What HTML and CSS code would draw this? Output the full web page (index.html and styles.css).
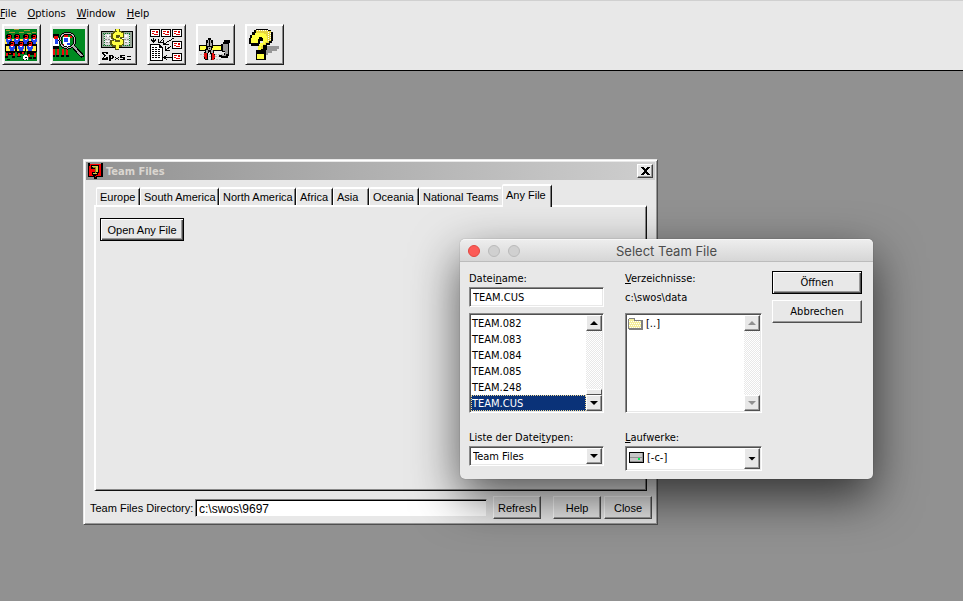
FILE: index.html
```html
<!DOCTYPE html>
<html lang="en">
<head>
<meta charset="utf-8">
<title>Team Files</title>
<link rel="stylesheet" href="styles.css">
</head>
<body>
<header class="app-bar">
  <nav class="menu">
    <a href="#file"><u>F</u>ile</a>
    <a href="#options"><u>O</u>ptions</a>
    <a href="#window"><u>W</u>indow</a>
    <a href="#help"><u>H</u>elp</a>
  </nav>
  <div class="toolbar">
    <div class="tool-group tool-group-a">
      <button class="tool" type="button" aria-label="Teams">
        <svg width="32" height="32" viewBox="0 0 32 32" shape-rendering="crispEdges">
          <defs>
            <g id="player">
              <path fill="#000" d="M1 0h4v1h1v3H5V2H1v2H0V1h1z"/>
              <path fill="#f00a0a" d="M1 1h4v4H1z"/>
              <path fill="#000" d="M1 1h1v1h2v1H2v1H1z"/>
              <path fill="#2145f0" d="M0 5h6v3H5v2H1V8H0z"/>
              <path fill="#fff" d="M2 5h2v1H2z"/>
            </g>
          </defs>
          <path fill="#008421" d="M0 0h32v32H0z"/>
          <path fill="#a4952e" d="M1 1h4v1H1zM9 0h5v1H9zM19 1h6v1h-6zM27 3h4v1h-4zM4 3h6v1H4zM14 3h5v1h-5zM22 4h4v1h-4z"/>
          <path fill="#fff04a" d="M0 10h8v5H0zM8 10h2v4H8zM14 10h4v4h-4zM24 10h8v5h-8z"/>
          <path fill="#000" d="M0 15h32v2H0z"/>
          <use href="#player" x="1" y="5"/><use href="#player" x="9" y="5"/><use href="#player" x="18" y="5"/><use href="#player" x="26" y="5"/>
          <path fill="#fff04a" d="M1 17h30v5H1z"/>
          <path fill="#000" d="M0 17h1v6H0zM10 17h2v6h-2zM20 17h1v6h-1zM31 17h1v6h-1z"/>
          <use href="#player" x="4" y="12"/><use href="#player" x="13" y="12"/><use href="#player" x="22" y="12"/>
          <path fill="#000" d="M1 22h9v4H1zM12 22h8v3h-8zM22 22h9v4h-9z"/>
          <path fill="#f00a0a" d="M1 24h2v3H1zM4 24h2v1H4zM8 24h2v3H8zM13 24h2v3h-2zM17 23h2v2h-2zM23 25h2v3h-2zM29 24h2v4h-2z"/>
          <path fill="#000" d="M0 27h3v2H0zM2 30h3v1H2zM7 27h3v2H7zM12 27h4v1h-4zM24 28h3v2h-3zM28 28h3v2h-3z"/>
          <path fill="#fff" d="M18 27h5v4h-5zM19 26h3v1h-3z"/>
          <path fill="#000" d="M20 28h2v1h-2zM18 30h1v1h-1zM21 30h1v1h-1z"/>
        </svg>
      </button>
      <button class="tool" type="button" aria-label="Search players">
        <svg width="32" height="32" viewBox="0 0 32 32" shape-rendering="crispEdges">
          <path fill="#008a21" d="M0 0h32v32H0z"/>
          <path fill="#fff" d="M0 9h6v9H0z"/>
          <path fill="#000" d="M0 5h6v3H0zM0 17h6v3H0zM0 26h2v2H0zM3 26h3v2H3zM8 26h3v2H8zM13 26h3v2h-3z"/>
          <path fill="#f00a0a" d="M1 7h4v3H1zM0 20h2v6H0zM4 20h2v6H4zM9 20h2v6H9zM13 20h2v6h-2z"/>
          <path fill="#2145f0" d="M2 10h3v5H2z"/>
          <path fill="#fff" d="M10 8h7v10h-7z"/>
          <path fill="#f00a0a" d="M11 5h4v3h-4zM17 7h2v2h-2zM10 15h1v3h-1z"/>
          <path fill="#2145f0" d="M11 9h4v4h-4zM14 14h3v2h-3z"/>
          <path fill="#000" d="M11 3h4v2h-4z"/>
          <circle cx="14.500" cy="11.500" r="7.500" fill="none" stroke="#000" stroke-width="3"/>
          <circle cx="14.500" cy="11.500" r="7.500" fill="none" stroke="#bcbcbc" stroke-width="1"/>
          <path stroke="#000" stroke-width="4" d="M20 17l10 11"/>
          <path stroke="#aaa" stroke-width="2" d="M20 17l9 10"/>
        </svg>
      </button>
      <button class="tool" type="button" aria-label="Prices">
        <svg width="32" height="32" viewBox="0 0 32 32" shape-rendering="crispEdges">
          <path fill="#000" d="M0 2h32v17H0z"/>
          <path fill="#97a497" d="M1 3h30v15H1z"/>
          <path fill="#ddd" d="M3 5h26v11H3z"/>
          <path fill="none" stroke="#087b28" stroke-dasharray="1 1" d="M2 4.500h27M2 16.500h27M3.500 5v11M28.500 5v11"/>
          <path fill="none" stroke="#909090" stroke-dasharray="2 1" d="M5 7.500h6M4 10.500h8M5 13.500h6M21 7.500h6M20 10.500h8M21 13.500h6"/>
          <path fill="#fff" d="M6 6h2v2H6zM5 12h3v1H5zM24 6h2v2h-2zM24 12h3v1h-3zM9 9h2v3H9zM21 9h2v3h-2z"/>
          <path fill="#5c5a10" d="M14 0h5v2h2v1h2v6h-4v-1h-1v1h3v1h2v6h-2v2h-3v3h-4v-3h-3v-2h-2v-5h4v1h1v-1h-2v-1h-2V4h2V2h2z"/>
          <path fill="#ffff42" d="M15 0h3v3h2v1h2v4h-3V6h-4v3h4v1h2v1h1v4h-1v1h-3v4h-3v-4h-3v-1h-1v-3h3v1h5v-2h-4v-1h-2v-1h-1V5h1V4h1V3h2z"/>
          <path fill="#000" d="M1 23h6v2H5v-1H3v1h1v1h1v1H4v1H3v1h2v-1h2v3H1v-2h1v-1h1v-2H2v-1H1zM8 26h4v1h1v2h-1v1h-2v2H8zM10 27v2h1v-2zM14 28h1v1h-1zM17 28h1v1h-1zM15 29h2v1h-2zM14 30h1v1h-1zM17 30h1v1h-1zM19 26h5v1h-3v1h3v3h-5v-1h3v-1h-3zM26 27h4v1h-4zM26 30h4v1h-4z"/>
        </svg>
      </button>
    </div>
    <div class="tool-group tool-group-b">
      <button class="tool" type="button" aria-label="Collect letters">
        <svg width="32" height="32" viewBox="0 0 32 32" shape-rendering="crispEdges">
          <defs>
            <g id="mail">
              <path fill="#000" d="M0 0h10v8H0z"/>
              <path fill="#fff" d="M1 1h8v6H1z"/>
              <path fill="#e00000" d="M2 2h3v1H2zM6 2h2v2H6zM2 4h2v1H2zM4 5h4v1H4z"/>
            </g>
          </defs>
          <use href="#mail" x="0" y="0"/><use href="#mail" x="11" y="0"/><use href="#mail" x="22" y="0"/>
          <use href="#mail" x="22" y="12"/><use href="#mail" x="22" y="24"/>
          <path fill="none" stroke="#000" d="M3.500 9v4M1 10.500l2.500 2.500 2.500-2.500M14 9l-5 5M8.500 10v3.500h4M24 9l-10 6M13.500 11v4h5M21 17l-5 4M15.500 17v4h4M22 28.500h-7M17 26l-3 2.500 3 2.500"/>
          <path fill="#000" d="M0 15h10v1h1v1h1v1h1v14H0z"/>
          <path fill="#fff" d="M1 16h8v3h3v12H1z"/>
          <path fill="none" stroke="#000" stroke-dasharray="2 1" d="M2 18.500h6M2 20.500h9M2 22.500h9M2 24.500h9M2 26.500h9M2 28.500h9"/>
        </svg>
      </button>
      <button class="tool" type="button" aria-label="Tools">
        <svg width="32" height="32" viewBox="0 0 32 32" shape-rendering="crispEdges">
          <path fill="none" stroke="#bdbdbd" stroke-dasharray="2 1" d="M1 25.500h30M4 27.500h24M8 30.500h14"/>
          <path fill="#000" d="M0 16h23v6H0z"/>
          <path fill="#ffff42" d="M1 17h6v4H1zM13 17h9v4h-9z"/>
          <path fill="#000" d="M22 15h2v-2h1v-2h6v3h-1v13h-1v2h-7v-1h-2v-2h5v-2h1v-1h-3z"/>
          <path fill="#9a9a9a" d="M24 15h5v7h-5zM26 22h3v3h-2v2h-4v-1h3z"/>
          <path fill="#000" d="M9 9h3v2h2v8h-1v3h2v3h1v5h-1v1h-3v-5l-1-3h-1l-1 3v5H6v-1H5v-7h1v-3h2v-2H7v-7h2z"/>
          <path fill="#aaa" d="M9 11h3v3H9zM8 14h2v3H8zM11 14h2v3h-2zM9 18h3v3H9zM7 21h2v3H7zM12 21h2v3h-2z"/>
          <path fill="#000" d="M10 11h1v6h-1zM10 19h1v1h-1z"/>
          <path fill="#e61010" d="M5 24h3v6H6v-2H5zM13 24h2v2h1v3h-1v2h-2z"/>
        </svg>
      </button>
      <button class="tool" type="button" aria-label="Help">
        <svg width="32" height="32" viewBox="0 0 32 32" shape-rendering="crispEdges">
          <path fill="#979797" d="M18 17h13v3h-2v2h-5v2h-4v2h-3z"/>
          <path fill="#000" d="M8 0h12v1h3v2h2v9h-1v2h-2v2h-3v5h-1v10H8v-7h2v-7h3v-2h2v-3h-3v3h-1v2H3v-2H1V9h1V6h2V3h2V1h2z"/>
          <path fill="#e6d63f" d="M8 1h12v1h3v10h-2v2h-3v2h-3v4h-4v-4h2v-2h4V6h-3V4H8z"/>
          <path fill="none" stroke="#fff" stroke-dasharray="1 1" d="M9 1.500h11M20.500 3v9M22.500 4v7"/>
          <path fill="#ffff42" d="M7 4h9v1h2v2h1v6h-2v2h-2v2h-2v4h-3v-4h2v-3h3V9h-1V8h-3v2h-1v4H3v-5h1V6h3zM9 25h7v5H9z"/>
          <path fill="#000" d="M8 21h9v3H8z"/>
        </svg>
      </button>
    </div>
  </div>
</header>

<main class="desktop">
  <section class="team-window" aria-label="Team Files">
    <div class="title-bar">
      <svg class="title-icon" width="15" height="16" viewBox="0 0 15 16" shape-rendering="crispEdges">
        <path fill="#000" d="M0 0h2v1h11V0h2v14H9v2H6v-2H0z"/>
        <path fill="#f00" d="M2 1h11v12H8v1H7v-1H1V3h1z"/>
        <path fill="#000" d="M3 2h8v8h-1v2H8v1H5v-1H4V9h3V6H3z"/>
        <path fill="#d8cc4a" d="M4 3h6v1H4zM8 4h2v5H8zM5 10h4v1H5z"/>
        <path fill="#8f8420" d="M5 4h3v1H5zM7 5h1v5H7z"/>
      </svg>
      <h1>Team Files</h1>
      <button class="close" type="button" aria-label="Close window">
        <svg width="9" height="8" viewBox="0 0 9 8" shape-rendering="crispEdges"><path d="M0 0h3v1h1v1h1V1h1V0h3v1H8v1H7v1H6v2h1v1h1v1h1v1H6V7H5V6H4v1H3v1H0V7h1V6h1V5h1V3H2V2H1V1H0z"/></svg>
      </button>
    </div>
    <div class="team-body">
      <div class="tabs" role="tablist">
        <button role="tab" type="button">Europe</button>
        <button role="tab" type="button">South America</button>
        <button role="tab" type="button">North America</button>
        <button role="tab" type="button">Africa</button>
        <button role="tab" type="button">Asia</button>
        <button role="tab" type="button">Oceania</button>
        <button role="tab" type="button">National Teams</button>
        <button role="tab" type="button" aria-selected="true">Any File</button>
      </div>
      <div class="panel" role="tabpanel">
        <button class="btn default" type="button">Open Any File</button>
      </div>
    </div>
    <div class="team-footer">
      <label for="dir">Team Files Directory:</label>
      <input id="dir" type="text" value="c:\swos\9697">
      <button class="btn refresh" type="button">Refresh</button>
      <button class="btn" type="button">Help</button>
      <button class="btn" type="button">Close</button>
    </div>
  </section>

  <section class="dialog" role="dialog" aria-label="Select Team File">
    <div class="dialog-title">
      <div class="lights">
        <button class="light red" type="button" aria-label="Close"></button>
        <button class="light" type="button" aria-label="Minimise"></button>
        <button class="light" type="button" aria-label="Zoom"></button>
      </div>
      <h2>Select Team File</h2>
    </div>
    <div class="dialog-body">
      <div class="col">
        <label for="name">Datei<u>n</u>ame:</label>
        <input class="sunken" id="name" type="text" value="TEAM.CUS">
        <div class="sunken list">
          <select size="6" aria-label="Dateien">
            <option>TEAM.082</option>
            <option>TEAM.083</option>
            <option>TEAM.084</option>
            <option>TEAM.085</option>
            <option>TEAM.248</option>
            <option selected>TEAM.CUS</option>
          </select>
          <div class="scroll">
            <button class="arrow up" type="button" aria-label="Scroll up"></button>
            <div class="track"><div class="thumb"></div></div>
            <button class="arrow down" type="button" aria-label="Scroll down"></button>
          </div>
        </div>
        <label class="lower" for="types">Liste der Datei<u>t</u>ypen:</label>
        <div class="sunken combo">
          <select id="types"><option>Team Files</option></select>
          <span class="arrow down"></span>
        </div>
      </div>
      <div class="col">
        <label for="dirs"><u>V</u>erzeichnisse:</label>
        <p class="path">c:\swos\data</p>
        <div class="sunken list">
          <svg class="folder" width="15" height="12" viewBox="0 0 15 12" shape-rendering="crispEdges">
            <path fill="#808080" d="M1 0h6v2h8v10H1v-1H0V1h1z"/>
            <path fill="#f4ee9a" d="M1 1h5v2h7v7H1z"/>
            <path fill="none" stroke="#fff" stroke-dasharray="1 1" d="M1 3.500h12M2 5.500h11M1 7.500h12M2 9.500h11"/>
          </svg>
          <select id="dirs" size="6"><option>[..]</option></select>
          <div class="scroll disabled">
            <button class="arrow up" type="button" disabled aria-label="Scroll up"></button>
            <div class="track"></div>
            <button class="arrow down" type="button" disabled aria-label="Scroll down"></button>
          </div>
        </div>
        <label class="lower" for="drives"><u>L</u>aufwerke:</label>
        <div class="sunken combo tall">
          <svg class="drive" width="15" height="11" viewBox="0 0 15 11" shape-rendering="crispEdges">
            <path fill="#000" d="M0 0h15v11H0z"/>
            <path fill="#c6c6c6" d="M1 1h13v9H1z"/>
            <path fill="#909090" d="M1 5h13v1H1zM1 9h13v1H1zM13 1h1v9h-1z"/>
            <path fill="#00f050" d="M9 6h2v2H9z"/>
          </svg>
          <select id="drives"><option>[-c-]</option></select>
          <span class="arrow down"></span>
        </div>
      </div>
      <div class="actions">
        <button class="btn default" type="button">Öffnen</button>
        <button class="btn" type="button">Abbrechen</button>
      </div>
    </div>
  </section>
</main>
</body>
</html>
```

FILE: styles.css
```css
* { box-sizing: border-box; }

body {
  margin: 0;
  min-height: 100vh;
  display: flex;
  flex-direction: column;
  background: #919191;
  color: #000;
  font: 11px/14px "DejaVu Sans Condensed", "Noto Sans", sans-serif;
}

button, input, select { font: inherit; color: inherit; margin: 0; border-radius: 0; }
h1, h2, p { margin: 0; font-size: inherit; }
svg { display: block; flex: none; }

/* Menu and toolbar */
.app-bar {
  background: #e8e8e8;
  border-top: 1px solid #d0d0d0;
  border-bottom: 1px solid #000;
  padding: 6px 0 5px;
}
.menu { display: flex; gap: 11px; }
.menu a { color: #000; text-decoration: none; }
.toolbar { display: flex; gap: 10px; padding: 3px 2px 0; }
.tool-group { display: flex; }
.tool-group-a { gap: 9px; }
.tool-group-b { gap: 10px; }
.tool {
  width: 39px;
  height: 41px;
  padding: 0 2px;
  background: #e8e8e8;
  border: 1px solid;
  border-color: #fff #202020 #202020 #fff;
  box-shadow: inset 1px 1px #fff, inset -1px -1px #888;
}

/* Free canvas of windows */
.desktop { position: relative; flex: 1; }

.team-window {
  position: absolute;
  left: 83px;
  top: 88px;
  width: 575px;
  background: #e8e8e8;
  border: 1px solid;
  border-color: #e8e8e8 #505050 #505050 #e8e8e8;
  box-shadow: inset 1px 1px #fff, inset -1px -1px #999;
  padding: 2px;
  font-family: "Liberation Sans", Arial, sans-serif;
}
.title-bar {
  display: flex;
  align-items: center;
  gap: 3px;
  height: 18px;
  padding: 0 2px;
  background: linear-gradient(to right, #929292, #cecece);
}
.title-bar h1 {
  flex: 1;
  padding-top: 2px;
  color: #dad6d0;
  font: bold 11px/14px "DejaVu Sans Condensed", sans-serif;
}
.close {
  display: grid;
  place-items: center;
  width: 16px;
  height: 14px;
  padding: 0;
  background: #e8e8e8;
  border: 1px solid;
  border-color: #fff #404040 #404040 #fff;
  box-shadow: inset -1px -1px #999;
}
.team-body { padding: 4px 8px 0; }
.tabs {
  display: grid;
  grid-template-columns: 44px 79px 77px 37px 36px 50px 83px 50px;
  align-items: end;
  margin-left: 2px;
}
.tabs button {
  height: 18px;
  padding: 0 3px;
  text-align: left;
  white-space: nowrap;
  background: #e8e8e8;
  border: 0 solid;
  border-width: 2px 1px 0 1px;
  border-color: #fff #101010 #fff #fff;
  border-radius: 2px 2px 0 0;
  box-shadow: inset -1px 0 #808080;
}
.tabs button:nth-child(7) { border-right-color: #e8e8e8; box-shadow: none; }
.tabs button[aria-selected] {
  position: relative;
  height: 23px;
  margin-bottom: -2px;
  padding-bottom: 4px;
}
.panel {
  height: 286px;
  padding: 11px 4px;
  border: 1px solid;
  border-color: #fff #101010 #101010 #fff;
  border-top-width: 2px;
  border-left-width: 2px;
  box-shadow: inset -1px -1px #888;
}
.btn {
  height: 23px;
  padding: 0 4px;
  background: #e8e8e8;
  border: 1px solid;
  border-color: #fff #505050 #505050 #fff;
  box-shadow: inset -1px -1px #999;
}
.btn.default {
  border-color: #000;
  box-shadow: inset 1px 1px #fff, inset -1px -1px #505050, inset -2px -2px #999;
}
.panel .btn { width: 84px; }
.team-footer {
  display: flex;
  align-items: center;
  gap: 3px;
  padding: 5px 3px 3px 4px;
}
.team-footer label { width: 102px; white-space: nowrap; }
.team-footer input {
  flex: 1;
  min-width: 0;
  height: 18px;
  padding: 2px 3px 0;
  font-size: 12px;
  background: #fff;
  border: 1px solid;
  border-color: #808080 #e8e8e8 #e8e8e8 #808080;
  box-shadow: inset 1px 1px #000;
}
.team-footer .btn { width: 48px; }
.team-footer .refresh { margin: 0 9px 0 3px; }

/* File dialog */
.dialog {
  position: absolute;
  left: 460px;
  top: 168px;
  width: 413px;
  background: #e8e8e8;
  border-radius: 5px;
  box-shadow: 0 0 1px rgba(0, 0, 0, .5), 0 18px 48px rgba(0, 0, 0, .65);
}
.dialog-title {
  display: grid;
  grid-template-columns: 1fr auto 1fr;
  align-items: center;
  height: 23px;
  padding: 0 8px;
  background: linear-gradient(#ededed, #d6d6d6);
  border-top: 1px solid #f6f6f6;
  border-bottom: 1px solid #bcbcbc;
  border-radius: 5px 5px 0 0;
}
.dialog-title h2 {
  color: #4c4c4c;
  font: 13px/16px Inter, Roboto, sans-serif;
}
.lights { display: flex; gap: 8px; }
.light {
  width: 12px;
  height: 12px;
  padding: 0;
  background: #d0d0d0;
  border: 1px solid #bababa;
  border-radius: 50%;
}
.light.red { background: #fc5b57; border-color: #e2463f; }
.dialog-body {
  display: grid;
  grid-template-columns: 156px 147px 90px;
  padding: 9px 11px 8px 9px;
}
.col { display: flex; flex-direction: column; }
.col:first-child { padding-right: 21px; }
.col:nth-child(2) { padding-right: 10px; }
.col label { height: 16px; padding-top: 1px; }
.path { height: 20px; padding-top: 4px; }
.sunken {
  background: #fff;
  border: 1px solid;
  border-color: #888 #fff #fff #888;
  box-shadow: inset 1px 1px #505050, inset -1px -1px #e8e8e8;
}
input.sunken { width: 100%; height: 20px; padding: 0 3px; }
.list {
  display: flex;
  height: 100px;
  margin-top: 6px;
  padding: 1px;
}
.list select {
  flex: 1;
  min-width: 0;
  height: 96px;
  padding: 0;
  border: 0;
  outline: 0;
  background: none;
  overflow: hidden;
}
.list option {
  height: 16px;
  min-height: 16px;
  padding: 2px 1px 0;
  line-height: 14px;
}
.list option:checked {
  color: #fff;
  background: #0a3278 linear-gradient(#0a3278, #0a3278);
  outline: 1px dotted #f0d890;
  outline-offset: -1px;
}
.folder { margin: 3px 2px 0 1px; }
.scroll { display: flex; flex-direction: column; width: 16px; }
.track {
  flex: 1;
  display: flex;
  align-items: flex-end;
  background: repeating-conic-gradient(#fff 0 25%, #e8e8e8 0 50%) 0 0 / 2px 2px;
}
.thumb {
  width: 100%;
  height: 6px;
  background: #e8e8e8;
  border: 1px solid;
  border-color: #fff #505050 #505050 #fff;
}
.arrow {
  display: grid;
  place-items: center;
  width: 16px;
  height: 16px;
  padding: 0;
  background: #e8e8e8;
  border: 1px solid;
  border-color: #fff #505050 #505050 #fff;
  box-shadow: inset -1px -1px #999;
}
.arrow::before {
  content: "";
  width: 8px;
  height: 4px;
  background: #000;
  clip-path: polygon(0 0, 100% 0, 50% 100%);
}
.arrow.up::before { clip-path: polygon(50% 0, 100% 100%, 0 100%); }
.disabled .arrow::before { background: #909090; }
.lower { margin-top: 17px; }
.combo {
  display: flex;
  align-items: center;
  height: 20px;
  padding: 1px;
}
.combo.tall { height: 25px; }
.combo select {
  appearance: none;
  flex: 1;
  min-width: 0;
  padding: 2px 2px 0;
  border: 0;
  background: none;
}
.combo.tall select { padding: 0 3px 2px; }
.combo .arrow { height: 100%; pointer-events: none; }
.drive { margin: 0 0 3px 2px; }
.actions { display: flex; flex-direction: column; gap: 6px; }
```
